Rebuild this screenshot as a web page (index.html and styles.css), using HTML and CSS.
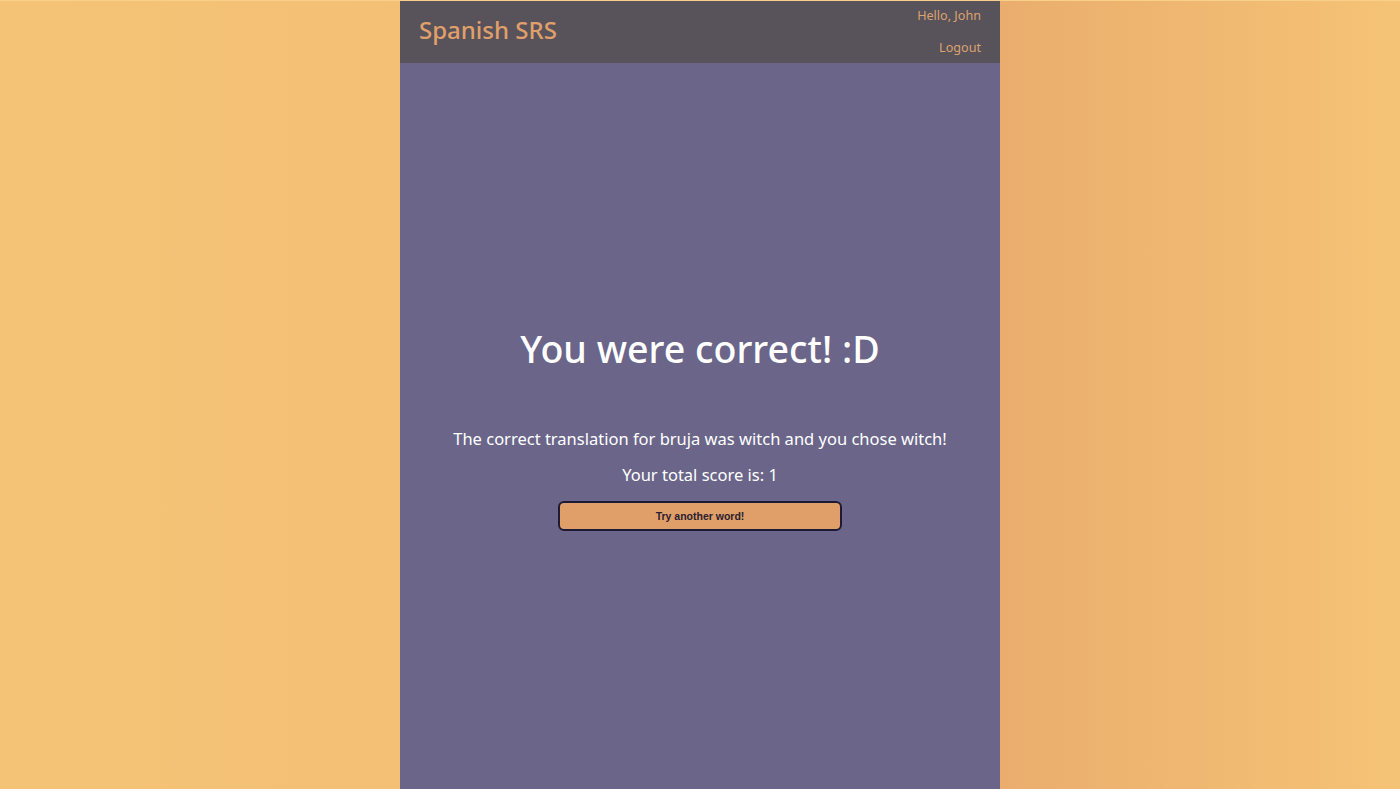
FILE: index.html
```html
<!DOCTYPE html>
<html lang="en">
<head>
<meta charset="utf-8">
<title>Spanish SRS</title>
<link rel="stylesheet" href="styles.css">
</head>
<body>
<div class="page">
  <header class="topbar">
    <div class="brand">Spanish SRS</div>
    <nav class="user">
      <span class="hello">Hello, John</span>
      <a class="logout" href="#">Logout</a>
    </nav>
  </header>
  <main class="result">
    <h1 class="result-title">You were correct! :D</h1>
    <p class="result-text">The correct translation for bruja was witch and you chose witch!</p>
    <p class="result-score">Your total score is: 1</p>
    <button class="next-btn" type="button">Try another word!</button>
  </main>
</div>
</body>
</html>
```
FILE: styles.css
```css
html, body {
  margin: 0;
  padding: 0;
  height: 100%;
}
body {
  background: linear-gradient(90deg, #f5c376 0%, #f3c075 28.6%, #eaad6d 71.4%, #f5c376 100%);
  border-top: 1px solid #f8d08a;
  box-sizing: border-box;
  font-family: "Noto Sans", "Open Sans", sans-serif;
}
.page {
  width: 600px;
  margin: 0 auto;
  min-height: calc(100vh - 1px);
  background: #6a6589;
  display: flex;
  flex-direction: column;
}
.topbar {
  background: #58525a;
  height: 62px;
  display: flex;
  justify-content: space-between;
  align-items: flex-start;
  padding: 0 19px;
}
.brand {
  color: #e0a06b;
  font-size: 24px;
  line-height: 58px;
  font-weight: 500;
}
.user {
  display: flex;
  flex-direction: column;
  align-items: flex-end;
  font-size: 12.6px;
  color: #dba36f;
  padding-top: 6px;
  gap: 15px;
}
.logout {
  color: #dba36f;
  text-decoration: none;
}
.result {
  display: flex;
  flex-direction: column;
  align-items: center;
  padding-top: 262px;
  color: #ffffff;
}
.result-title {
  margin: 0;
  font-size: 37.6px;
  font-weight: 500;
  line-height: 48px;
}
.result-text {
  margin: 54px 0 0;
  font-size: 16.5px;
  line-height: 24px;
}
.result-score {
  margin: 12px 0 0;
  font-size: 16.5px;
  line-height: 24px;
}
.next-btn {
  margin-top: 14px;
  width: 284px;
  height: 30px;
  background: #e09f68;
  border: 2px solid #1d1a35;
  border-radius: 6px;
  font-family: "Liberation Sans", Arial, sans-serif;
  font-weight: bold;
  font-size: 10.5px;
  color: #2a2030;
  cursor: pointer;
}
```
